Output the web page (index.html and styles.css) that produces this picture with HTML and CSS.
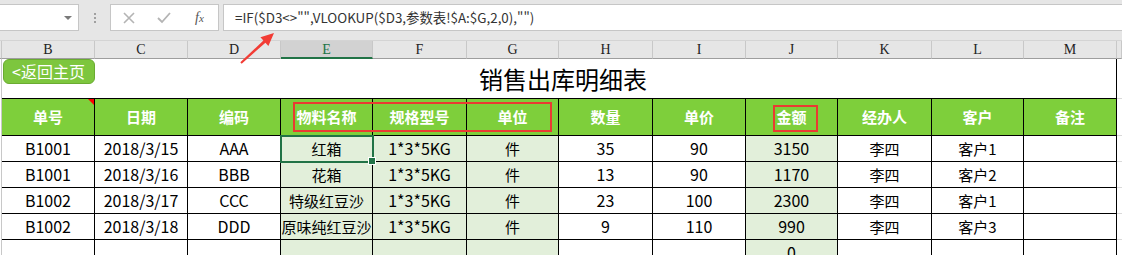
FILE: index.html
```html
<!DOCTYPE html>
<html lang="zh">

<head>
    <meta charset="UTF-8">
    <title>销售出库明细表</title>
    <link rel="stylesheet" href="styles.css">
</head>

<body>
    <!-- formula bar -->
    <div class="toolbar">
        <div class="namebox"><span class="drop"></span></div>
        <div class="grip"><i></i><i></i><i></i></div>
        <div class="btns">
            <svg width="12" height="12" viewBox="0 0 12 12"><path d="M1 1L11 11M11 1L1 11" stroke="#b4b4b4" stroke-width="1.6" fill="none"/></svg>
            <svg width="14" height="12" viewBox="0 0 14 12"><path d="M1 6L5 10L13 1" stroke="#b4b4b4" stroke-width="1.8" fill="none"/></svg>
            <span class="fx">f<small>x</small></span>
        </div>
        <div class="formula">=IF($D3&lt;&gt;"",VLOOKUP($D3,参数表!$A:$G,2,0),"")</div>
    </div>

    <!-- sheet -->
    <div class="sheet">
        <div class="ch a"></div>
        <div class="ch">B</div>
        <div class="ch">C</div>
        <div class="ch">D</div>
        <div class="ch sel">E</div>
        <div class="ch">F</div>
        <div class="ch">G</div>
        <div class="ch">H</div>
        <div class="ch">I</div>
        <div class="ch">J</div>
        <div class="ch">K</div>
        <div class="ch">L</div>
        <div class="ch">M</div>
        <div class="ch n"></div>

        <div class="a"></div>
        <div class="title">销售出库明细表</div>
        <div class="n"></div>

        <div class="a"></div>
        <div class="hd note">单号</div>
        <div class="hd">日期</div>
        <div class="hd">编码</div>
        <div class="hd">物料名称</div>
        <div class="hd">规格型号</div>
        <div class="hd">单位</div>
        <div class="hd">数量</div>
        <div class="hd">单价</div>
        <div class="hd">金额</div>
        <div class="hd">经办人</div>
        <div class="hd">客户</div>
        <div class="hd">备注</div>
        <div class="n"></div>

        <div class="a"></div>
        <div class="c en">B1001</div>
        <div class="c en">2018/3/15</div>
        <div class="c en">AAA</div>
        <div class="c lg active">红箱<span class="handle"></span></div>
        <div class="c lg en">1*3*5KG</div>
        <div class="c lg">件</div>
        <div class="c en">35</div>
        <div class="c en">90</div>
        <div class="c lg en">3150</div>
        <div class="c">李四</div>
        <div class="c">客户1</div>
        <div class="c"></div>
        <div class="n"></div>

        <div class="a"></div>
        <div class="c en">B1001</div>
        <div class="c en">2018/3/16</div>
        <div class="c en">BBB</div>
        <div class="c lg">花箱</div>
        <div class="c lg en">1*3*5KG</div>
        <div class="c lg">件</div>
        <div class="c en">13</div>
        <div class="c en">90</div>
        <div class="c lg en">1170</div>
        <div class="c">李四</div>
        <div class="c">客户2</div>
        <div class="c"></div>
        <div class="n"></div>

        <div class="a"></div>
        <div class="c en">B1002</div>
        <div class="c en">2018/3/17</div>
        <div class="c en">CCC</div>
        <div class="c lg">特级红豆沙</div>
        <div class="c lg en">1*3*5KG</div>
        <div class="c lg">件</div>
        <div class="c en">23</div>
        <div class="c en">100</div>
        <div class="c lg en">2300</div>
        <div class="c">李四</div>
        <div class="c">客户1</div>
        <div class="c"></div>
        <div class="n"></div>

        <div class="a"></div>
        <div class="c en">B1002</div>
        <div class="c en">2018/3/18</div>
        <div class="c en">DDD</div>
        <div class="c lg">原味纯红豆沙</div>
        <div class="c lg en">1*3*5KG</div>
        <div class="c lg">件</div>
        <div class="c en">9</div>
        <div class="c en">110</div>
        <div class="c lg en">990</div>
        <div class="c">李四</div>
        <div class="c">客户3</div>
        <div class="c"></div>
        <div class="n"></div>

        <div class="a"></div>
        <div class="c"></div>
        <div class="c"></div>
        <div class="c"></div>
        <div class="c lg"></div>
        <div class="c lg"></div>
        <div class="c lg"></div>
        <div class="c"></div>
        <div class="c"></div>
        <div class="c lg en">0</div>
        <div class="c"></div>
        <div class="c"></div>
        <div class="c"></div>
        <div class="n"></div>

        <!-- floating shapes on the sheet -->
        <div class="back">&lt;返回主页</div>
        <div class="mark mark1"></div>
        <div class="mark mark2"></div>
    </div>

    <!-- red arrow pointing at the formula -->
    <svg class="arrow" width="56" height="46" viewBox="0 0 56 46">
        <polygon points="10.3,37.3 33.4,15.6 30.4,12.3 44,8 38.4,21.1 35.4,17.8 11.7,38.7" fill="#f23c35"/>
    </svg>
</body>

</html>
```

FILE: styles.css
```css
body {
    margin: 0;
    font-family: "Noto Sans CJK SC", "Noto Sans", sans-serif;
    background: #fff;
    overflow: hidden;
}

/* formula bar */
.toolbar {
    height: 41px;
    background: #e6e6e6;
    display: flex;
    align-items: flex-start;
    padding-top: 4px;
    box-sizing: border-box;
    border-bottom: 1px solid #d4d4d4;
}

.namebox {
    width: 79px;
    height: 27px;
    background: #fff;
    border: 1px solid #c6c6c6;
    border-left: none;
    box-sizing: border-box;
    position: relative;
}

.drop {
    position: absolute;
    right: 6px;
    top: 11px;
    border-left: 4px solid transparent;
    border-right: 4px solid transparent;
    border-top: 4px solid #7a7a7a;
}

.grip {
    width: 31px;
    height: 27px;
    display: flex;
    flex-direction: column;
    align-items: center;
    justify-content: center;
    gap: 2px;
}

.grip i {
    width: 2px;
    height: 2px;
    background: #a0a0a0;
}

.btns {
    width: 109px;
    height: 27px;
    background: #fff;
    border: 1px solid #c6c6c6;
    box-sizing: border-box;
    display: flex;
    align-items: center;
    padding-left: 12px;
    gap: 22px;
}

.fx {
    font-family: "Liberation Serif", serif;
    font-style: italic;
    font-size: 14px;
    color: #555;
    margin-left: 2px;
}

.fx small {
    font-size: 11px;
}

.formula {
    flex: 1;
    height: 27px;
    margin-left: 4px;
    background: #fff;
    border: 1px solid #c6c6c6;
    border-right: none;
    box-sizing: border-box;
    padding-left: 11px;
    font-size: 13.4px;
    line-height: 25px;
    color: #333;
}

/* sheet grid */
.sheet {
    position: relative;
    display: grid;
    grid-template-columns: 2px 93px 93px 93px 92px 94px 92px 94px 93px 92px 94px 92px 93px 1fr;
    grid-template-rows: 18px 40px 37px repeat(5, 26px);
}

.sheet > div {
    box-sizing: border-box;
}

.ch {
    background: #e6e6e6;
    border-right: 1px solid #c8c8c8;
    border-bottom: 1px solid #9e9e9e;
    font-family: "Liberation Serif", serif;
    font-size: 14px;
    line-height: 17px;
    text-align: center;
    color: #222;
}

.ch.sel {
    background: #d2d2d2;
    color: #217346;
    border-bottom: 2px solid #217346;
}

.a {
    border-right: 1px solid #c8c8c8;
}

.n {
    border-bottom: 1px solid #dadada;
}

.ch.n {
    border-bottom: 1px solid #9e9e9e;
}

.title {
    grid-column: 2 / 14;
    border-right: 1px solid #000;
    border-bottom: 1px solid #000;
    font-size: 24px;
    line-height: 40px;
    text-align: center;
    color: #000;
    padding-left: 8px;
}

.hd {
    background: #7ecf3b;
    color: #fff;
    font-weight: bold;
    font-size: 15px;
    line-height: 36px;
    text-align: center;
    border-right: 1px solid #000;
    border-bottom: 1px solid #000;
}

.note {
    position: relative;
}

.note::after {
    content: "";
    position: absolute;
    right: 0;
    top: 0;
    border-top: 6px solid #f00;
    border-left: 6px solid transparent;
}

.c {
    font-size: 15px;
    line-height: 25px;
    text-align: center;
    color: #000;
    border-right: 1px solid #000;
    border-bottom: 1px solid #000;
    white-space: nowrap;
}

.c.en {
    font-size: 16px;
}

.lg {
    background: #e2efda;
}

.active {
    position: relative;
    outline: 2px solid #217346;
    outline-offset: -1px;
}

.handle {
    position: absolute;
    right: -4px;
    bottom: -4px;
    width: 6px;
    height: 6px;
    background: #217346;
    border: 1px solid #fff;
}

/* floating shapes */
.back {
    position: absolute;
    left: 3px;
    top: 18px;
    width: 92px;
    height: 25px;
    box-sizing: border-box;
    background: #7dc63e;
    border: 1px solid #6aab31;
    border-radius: 6px;
    color: #fff;
    font-size: 16px;
    line-height: 22px;
    padding-left: 8px;
}

.mark {
    position: absolute;
    border: 2px solid #ea3a32;
    box-sizing: border-box;
}

.mark1 {
    left: 293px;
    top: 61px;
    width: 259px;
    height: 30px;
}

.mark2 {
    left: 773px;
    top: 64px;
    width: 45px;
    height: 27px;
}

.arrow {
    position: absolute;
    left: 230px;
    top: 25px;
}
```
